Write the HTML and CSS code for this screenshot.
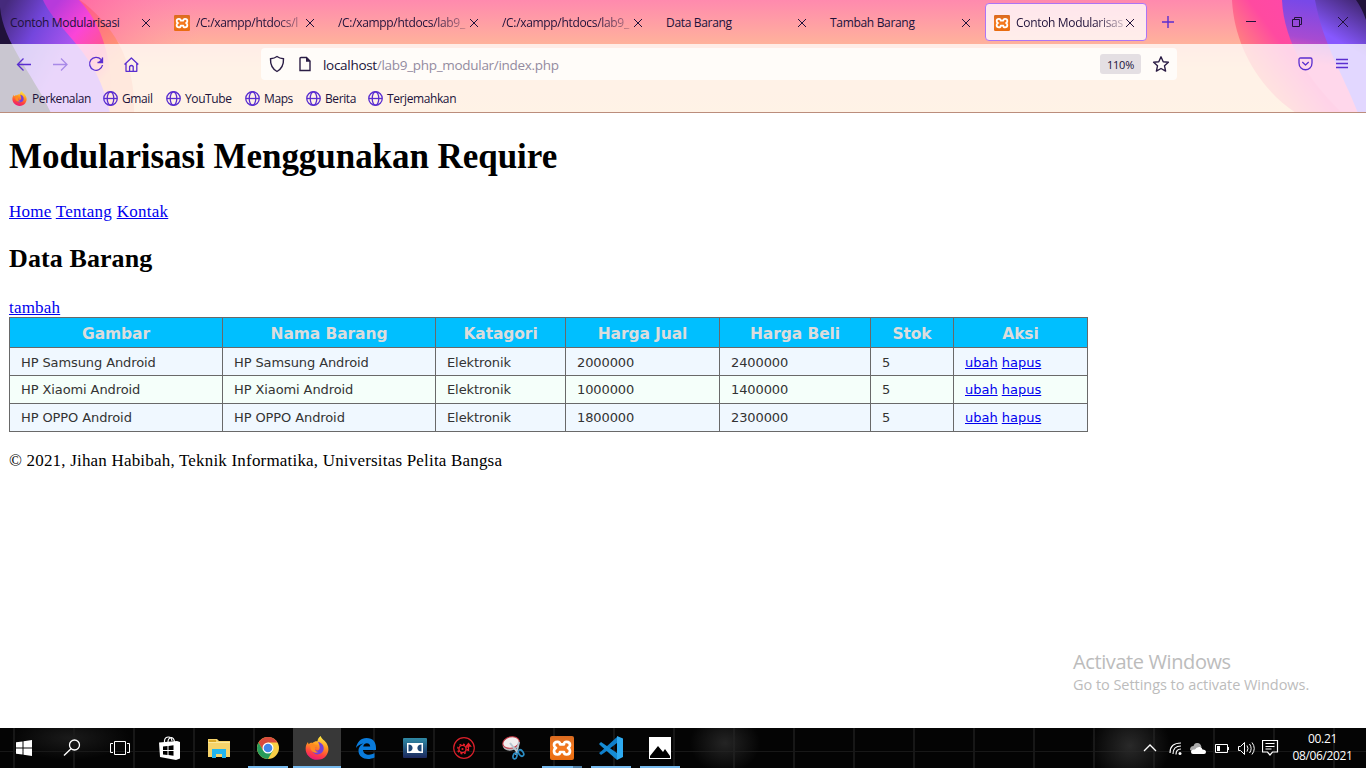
FILE: index.html
```html
<!DOCTYPE html>
<html lang="id">
<head>
<meta charset="utf-8">
<title>Contoh Modularisasi</title>
<link rel="stylesheet" href="styles.css">
</head>
<body>
<svg class="defs" width="0" height="0">
  <defs>
    <linearGradient id="ffBody" x1="0.7" y1="0" x2="0.4" y2="1"><stop offset="0" stop-color="#fff04a"/><stop offset=".4" stop-color="#ff9a1f"/><stop offset=".75" stop-color="#ff4040"/><stop offset="1" stop-color="#e8187c"/></linearGradient>
    <linearGradient id="xaBg" x1="0" y1="0" x2="0" y2="1"><stop offset="0" stop-color="#d96a20"/><stop offset=".5" stop-color="#f57a20"/><stop offset="1" stop-color="#e86c10"/></linearGradient>
    <symbol id="close" viewBox="0 0 10 10"><path d="M1 1l8 8M9 1L1 9" fill="none" stroke="currentColor" stroke-width="1"/></symbol>
    <symbol id="xampp" viewBox="0 0 24 24"><rect width="24" height="24" rx="2" fill="url(#xaBg)"/><path d="M7.5 5.8C4.600 5.800 4 7.500 4 9c0 1.700 1 2.500 2 3-1 .5-2 1.300-2 3 0 2 1.300 3.500 3.500 3.500 1.700 0 2.500-.7 2.500-2.500h4c0 1.800.8 2.500 2.500 2.500 2.200 0 3.500-1.500 3.500-3.500 0-1.700-1-2.500-2-3 1-.5 2-1.300 2-3 0-1.500-.6-3.200-3.500-3.200-1.700 0-2.500.8-2.500 2.500h-4c0-1.700-.8-2.500-2.500-2.500z" fill="none" stroke="#fff" stroke-width="2.700" stroke-linejoin="round"/></symbol>
    <symbol id="globe" viewBox="0 0 16 16"><g fill="none" stroke="#5a2ed0" stroke-width="1.4"><circle cx="8" cy="8" r="7.2"/><ellipse cx="8" cy="8" rx="3.5" ry="7.2"/><path d="M1 8h14"/></g></symbol>
    <symbol id="firefox" viewBox="0 0 24 24"><path d="M3 6c0 1 .3 1.600.8 2.300C5 7 6.500 6.600 7.500 7 9 5.500 11 5 12.500 5.300 12.500 3.200 14 1 15.800 0c.2 3 5 4.500 6.400 8.500C24 12 24 16 21 20c-4 5-13 5.300-17.500 0C-.5 15.500 0 9.500 3 6z" fill="url(#ffBody)"/><path d="M13 6c4 .5 6.500 4 5.500 8-1 4-6 5.500-9 3.500-3-1.600-4-5-2.500-8 1.500.4 3 .5 5 .8-.4 1-1.500 1.500-2.600 1.800 0 3 4.600 3.500 5.200.4.400-2.500-.6-4.500-1.600-6.500z" fill="#7540d8"/><path d="M5 8c2-1 4-.4 5 1 1 .3 2 .5 3 .5-.6 1.500-2 1.500-3 2.500-.5 2 1 4 3.500 4-3 2-7 0-8-3z" fill="#ff8a20"/></symbol>
  </defs>
</svg>
<div class="screen">
  <header class="browser">
    <svg class="art" viewBox="0 0 1366 113" width="1366" height="113">
      <defs>
        <linearGradient id="base" x1="0" y1="0" x2="0" y2="113" gradientUnits="userSpaceOnUse"><stop offset="0" stop-color="#ff8aae"/><stop offset=".4" stop-color="#ffb39b"/><stop offset=".6" stop-color="#ffc89a"/><stop offset="1" stop-color="#ffcb98"/></linearGradient>
        <linearGradient id="glowL" x1="80" y1="0" x2="200" y2="0" gradientUnits="userSpaceOnUse"><stop offset="0" stop-color="#ff5a9c" stop-opacity=".6"/><stop offset="1" stop-color="#ff8aae" stop-opacity="0"/></linearGradient>
        <linearGradient id="orL" x1="90" y1="0" x2="130" y2="50" gradientUnits="userSpaceOnUse"><stop offset="0" stop-color="#ff5a8c"/><stop offset="1" stop-color="#ff9d70"/></linearGradient>
        <linearGradient id="mgL" x1="55" y1="5" x2="120" y2="60" gradientUnits="userSpaceOnUse"><stop offset="0" stop-color="#b73adb"/><stop offset=".4" stop-color="#fb45d8"/><stop offset=".75" stop-color="#ff548f"/><stop offset="1" stop-color="#ff9a70"/></linearGradient>
        <linearGradient id="puL" x1="8" y1="0" x2="75" y2="35" gradientUnits="userSpaceOnUse"><stop offset="0" stop-color="#452a7c"/><stop offset=".5" stop-color="#7446dd"/><stop offset="1" stop-color="#a855ee"/></linearGradient>
        <linearGradient id="orR" x1="1232" y1="44" x2="1290" y2="0" gradientUnits="userSpaceOnUse"><stop offset="0" stop-color="#ff8a79"/><stop offset=".55" stop-color="#ff4aa0"/><stop offset="1" stop-color="#ff48a8"/></linearGradient>
        <linearGradient id="puR" x1="1300" y1="0" x2="1290" y2="60" gradientUnits="userSpaceOnUse"><stop offset="0" stop-color="#7848e8"/><stop offset=".6" stop-color="#a74bd1"/><stop offset="1" stop-color="#ff58aa"/></linearGradient>
        <linearGradient id="viR" x1="1330" y1="36" x2="1352" y2="0" gradientUnits="userSpaceOnUse"><stop offset="0" stop-color="#8758ff"/><stop offset="1" stop-color="#462a7c"/></linearGradient>
      </defs>
      <rect width="1366" height="113" fill="url(#base)"/>
      <path d="M80 0h120v44H120z" fill="url(#glowL)"/>
      <path d="M0 0h80c30 22 56 58 54 113H0z" fill="url(#orL)"/>
      <path d="M0 0h79c23 24 36 62 31 113H0z" fill="url(#mgL)"/>
      <path d="M0 0h43c16 34 54 50 67 113H0z" fill="url(#puL)"/>
      <path d="M0 7c3 35 31 64 51 106H0z" fill="#20123a"/>
      <path d="M1232 0c2 44 26 88 64 113h70V0z" fill="url(#orR)"/>
      <path d="M1282 0c2 44 28 82 60 113h24V0z" fill="url(#puR)"/>
      <path d="M1315 0c8 44 26 70 43 113h8V0z" fill="url(#viR)"/>
      <path d="M1356 0q6 8 10 20V0z" fill="#20123a"/>
    </svg>
    <div class="tabs">
      <div class="tab"><span class="label">Contoh Modularisasi</span><svg class="x"><use href="#close"/></svg></div>
      <div class="tab"><svg class="fav"><use href="#xampp"/></svg><span class="label fade">/C:/xampp/htdocs/l</span><svg class="x"><use href="#close"/></svg></div>
      <div class="tab"><span class="label fade">/C:/xampp/htdocs/lab9_</span><svg class="x"><use href="#close"/></svg></div>
      <div class="tab"><span class="label fade">/C:/xampp/htdocs/lab9_</span><svg class="x"><use href="#close"/></svg></div>
      <div class="tab"><span class="label">Data Barang</span><svg class="x"><use href="#close"/></svg></div>
      <div class="tab"><span class="label">Tambah Barang</span><svg class="x"><use href="#close"/></svg></div>
      <div class="tab active"><svg class="fav"><use href="#xampp"/></svg><span class="label fade">Contoh Modularisas</span><svg class="x"><use href="#close"/></svg></div>
      <svg class="plus" width="12" height="12"><path d="M6 0v12M0 6h12" stroke="#5a2ed0" stroke-width="1.4"/></svg>
      <div class="window">
        <svg width="46" height="44"><path d="M18 21.500h10" stroke="#20123a"/></svg>
        <svg width="46" height="44"><path d="M18.500 19.500h7v7h-7zM20.500 19.500v-2h7v7h-2" fill="none" stroke="#20123a"/></svg>
        <svg width="46" height="44"><path d="M18 17l10 10M28 17L18 27" stroke="#20123a"/></svg>
      </div>
    </div>
    <div class="toolbar">
      <div class="row">
        <div class="navs">
          <svg width="36" height="40"><path d="M31 20.500H17.500M23.500 14.500l-6 6 6 6" class="ink"/></svg>
          <svg width="36" height="40" class="dim"><path d="M17 20.500h14M25 14.500l6 6-6 6" class="ink"/></svg>
          <svg width="36" height="40"><path d="M29 15.500a6.500 6.500 0 1 0 1.500 5.500M30.500 13.500v5h-5" class="ink"/><path d="M31 13.500v5.500h-5.500z" fill="#5a2ed0"/></svg>
          <svg width="36" height="40"><path d="M16.500 20.500l6.900-6.500 6.900 6.500M18 19.500v7.800h10.800v-7.800M21.600 27v-4.500q1.800-2 3.600 0V27" class="ink" stroke-linejoin="round"/></svg>
        </div>
        <div class="urlbar">
          <svg width="16" height="18"><path d="M8 1.500C6 3 4 3.500 1.500 3.800 1.300 9 2.500 13.500 8 16.500c5.500-3 6.700-7.500 6.500-12.700C12 3.500 10 3 8 1.500z" class="dark"/></svg>
          <svg class="doc" width="12" height="16"><path d="M2 1.500h5.500l3.500 3.500v9.500H1V2.500q0-1 1-1z" class="dark"/><path d="M7 1v4.700h4.500z" fill="#2b1d45"/></svg>
          <span class="url">localhost<i>/lab9_php_modular/index.php</i></span>
          <span class="zoom">110%</span>
          <svg class="star" width="18" height="18"><path d="M9 1.800l2.200 4.900 5.200.6-3.900 3.500 1.100 5.300L9 13.500l-4.600 2.600 1.100-5.300-3.900-3.500 5.200-.6z" class="dark" stroke-linejoin="round"/></svg>
        </div>
        <svg class="pocket" width="16" height="14"><path d="M2.500 1h10q1.500 0 1.500 1.500V6c0 9-13 9-13 0V2.500Q1 1 2.500 1zM4.300 5l3.200 3 3.200-3" class="ink" stroke-linejoin="round"/></svg>
        <svg class="menu" width="12" height="12"><path d="M0 1.500h12M0 5.500h12M0 9.500h12" class="ink"/></svg>
      </div>
      <nav class="marks">
        <span class="m1"><svg><use href="#firefox"/></svg>Perkenalan</span>
        <span class="m2"><svg><use href="#globe"/></svg>Gmail</span>
        <span class="m3"><svg><use href="#globe"/></svg>YouTube</span>
        <span class="m4"><svg><use href="#globe"/></svg>Maps</span>
        <span class="m5"><svg><use href="#globe"/></svg>Berita</span>
        <span class="m6"><svg><use href="#globe"/></svg>Terjemahkan</span>
      </nav>
    </div>
  </header>

  <main class="page">
    <h1>Modularisasi Menggunakan Require</h1>
    <nav class="links"><a href="#">Home</a> <a href="#">Tentang</a> <a href="#">Kontak</a></nav>
    <h2>Data Barang</h2>
    <div class="add"><a href="#">tambah</a></div>
    <table class="goods">
      <colgroup><col class="c1"><col class="c2"><col class="c3"><col class="c4"><col class="c5"><col class="c6"><col class="c7"></colgroup>
      <tr><th>Gambar</th><th>Nama Barang</th><th>Katagori</th><th>Harga Jual</th><th>Harga Beli</th><th>Stok</th><th>Aksi</th></tr>
      <tr class="first"><td>HP Samsung Android</td><td>HP Samsung Android</td><td>Elektronik</td><td>2000000</td><td>2400000</td><td>5</td><td><a href="#">ubah</a> <a href="#">hapus</a></td></tr>
      <tr class="alt"><td>HP Xiaomi Android</td><td>HP Xiaomi Android</td><td>Elektronik</td><td>1000000</td><td>1400000</td><td>5</td><td><a href="#">ubah</a> <a href="#">hapus</a></td></tr>
      <tr><td>HP OPPO Android</td><td>HP OPPO Android</td><td>Elektronik</td><td>1800000</td><td>2300000</td><td>5</td><td><a href="#">ubah</a> <a href="#">hapus</a></td></tr>
    </table>
    <p class="copy">© 2021, Jihan Habibah, Teknik Informatika, Universitas Pelita Bangsa</p>
  </main>

  <aside class="activate"><div class="a1">Activate Windows</div><div class="a2">Go to Settings to activate Windows.</div></aside>

  <footer class="taskbar">
    <div class="apps">
      <div class="app"><svg width="16" height="16"><path d="M0 2.300l6.500-.9v6.100H0zM7.500 1.200L16 0v7.500H7.500zM0 8.500h6.500v6.100L0 13.700zM7.500 8.500H16V16l-8.500-1.200z" fill="#fff"/></svg></div>
      <div class="app"><svg width="18" height="18"><circle cx="11.500" cy="6" r="5" fill="none" stroke="#fff" stroke-width="1.300"/><path d="M8 9.700L1 16.500" stroke="#fff" stroke-width="1.400"/></svg></div>
      <div class="app"><svg width="20" height="14"><path d="M4.500.5h11v13h-11zM3 2.500H.5v9H3M17 2.500h2.500v9H17" fill="none" stroke="#fff"/></svg></div>
      <div class="app store"><svg width="22" height="24"><path d="M5.500 8V4.500Q6 1 9.500 1q3 0 3.500 4M9 6q0-4 3.500-4.500Q15 2 15.500 6" fill="none" stroke="#fff" stroke-width="1.200"/><path d="M0 6.500L18 5l3 1v16.500L17 24 1 21z" fill="#fff"/><path d="M4 10.500l4.500-.5v4H4zM9.500 9.900l5-.6V14h-5zM4 15h4.500v4L4 18.500zM9.500 15h5v4.700l-5-.6z" fill="#000"/></svg></div>
      <div class="app"><svg width="22" height="19"><path d="M0 0h9l2 2h11v16H0z" fill="#f6d36a"/><path d="M1 1h7v2H1z" fill="#dba928"/><path d="M0 3h22v1H0z" fill="#fde99c"/><path d="M4 10h14v9h-4v-4H8v4H4z" fill="#22b6ee"/></svg></div>
      <div class="app run"><svg width="22" height="22"><circle cx="11" cy="11" r="11" fill="#f9cf45"/><path d="M1.500 5.500A11 11 0 0 1 20.500 5.500H11l-4.800 8.200z" fill="#d94a3d"/><path d="M1.500 5.500A11 11 0 0 0 11 22l4.800-8.200H6.200z" fill="#279b5b"/><circle cx="11" cy="11" r="5.500" fill="#fff"/><circle cx="11" cy="11" r="4.300" fill="#4386ea"/></svg></div>
      <div class="app current"><svg width="24" height="24"><use href="#firefox"/></svg></div>
      <div class="app"><svg width="20" height="21"><path d="M0 10C1 4 5 0 10.500 0 17 0 20 4 20 10v2H7c.3 5 6.500 6 11.500 3.300v4.200C11 23 2.500 20 2.500 13c0-4 2.500-6.500 5-7.500C4.500 5.800 1.800 7.500 0 10zm7.200-1.500h7c0-4.500-6.500-4.500-7 0z" fill="#0a7bdb"/></svg></div>
      <div class="app"><svg width="24" height="20"><defs><linearGradient id="db" x1="0" y1="0" x2="0" y2="1"><stop offset="0" stop-color="#2f8aa5"/><stop offset="1" stop-color="#1c285d"/></linearGradient></defs><rect width="24" height="20" rx="1" fill="url(#db)"/><path d="M4 5h16v10H4z" fill="#fff"/><path d="M5.500 6.500C11 6.500 11 13.500 5.500 13.500zM18.500 6.500C13 6.500 13 13.500 18.500 13.500z" fill="#1f4876"/></svg></div>
      <div class="app"><svg width="22" height="22"><circle cx="11" cy="11" r="10.300" fill="none" stroke="#d8202a" stroke-width="1.200"/><circle cx="9.500" cy="12" r="3.600" fill="none" stroke="#e8202a" stroke-width="1.400"/><circle cx="9.500" cy="12" r="4.800" fill="none" stroke="#e8202a" stroke-width="1.400" stroke-dasharray="1.900 1.870"/><circle cx="9.500" cy="12" r="1.100" fill="#e8202a"/><path d="M15.500 14V8M13.500 9l2-2.500 2 2.500z" stroke="#e8202a" fill="#e8202a" stroke-width="1.300"/></svg></div>
      <div class="app"><svg width="23" height="24"><ellipse cx="9" cy="8" rx="8.500" ry="6.500" transform="rotate(-20 9 8)" fill="#b9b9bd"/><ellipse cx="9" cy="6.500" rx="8.300" ry="5.600" transform="rotate(-15 9 6.500)" fill="#f1eeee" stroke="#c73845"/><path d="M8 7l8 10M17 6l-3 13" stroke="#b8c5cf" stroke-width="2"/><ellipse cx="19" cy="17" rx="2.200" ry="3.500" transform="rotate(-35 19 17)" fill="none" stroke="#2b8dc4" stroke-width="1.700"/><ellipse cx="13" cy="20" rx="1.900" ry="3" transform="rotate(15 13 20)" fill="none" stroke="#2b8dc4" stroke-width="1.700"/></svg></div>
      <div class="app run multi"><svg width="24" height="24"><use href="#xampp"/></svg></div>
      <div class="app run"><svg width="24" height="24"><path d="M18 1L2 15.500 0 17l2 2 3-2L18 7z" fill="#0f7fca"/><path d="M2 6L0 8l2 2 16 14V17z" fill="#168cd4"/><path d="M18 0l6 2.500v18.500L18 24z" fill="#2eaaf0"/></svg></div>
      <div class="app run"><svg width="22" height="22"><path d="M0 0h22v22H0z" fill="#fff"/><path d="M1 19l8-10 5 6 2-3 5 7v2H1z" fill="#000"/></svg></div>
    </div>
    <div class="tray">
      <svg width="120" height="40" class="status"><path d="M4 23l6-6 6 6" fill="none" stroke="#fff" stroke-width="1.300"/><g fill="none" stroke="#fff" stroke-width="1.200"><path d="M30 25Q30 15 41 15"/><path d="M33 26q0-8 8-8"/><path d="M36 26.500q0-5.500 5-5.500"/></g><circle cx="40" cy="25.500" r="1.500" fill="#fff"/><path d="M50 22q0-4 3.500-4 1-3.500 4-3 3 0 4 4l-7 5z" fill="#aaa"/><path d="M51 24q0-3 4-2.500 1.500-3 5-2.500 2 0 2.500 2.500 3.500 0 3.500 2.500 0 2-2 2H53q-2 0-2-2z" fill="#fff"/><path d="M75.500 16.500h12v8h-12zM88.500 19v3" fill="none" stroke="#fff"/><path d="M77 18h3v5h-3z" fill="#fff"/><path d="M98.500 18.500h2l4-4v12l-4-4h-2zM107 17.500q2 3 0 6M109.500 16q3.300 4.500 0 9M112 14.500q4.500 6 0 12" fill="none" stroke="#fff"/></svg>
      <svg width="17" height="17" class="note"><path d="M.5.5h15v11.500h-5l-2.500 3-2.500-3h-5zM3.500 3.500h9M3.500 6.500h9M3.500 9h6" fill="none" stroke="#fff" stroke-width="1.200"/></svg>
      <div class="clock"><div class="time">00.21</div><div class="date">08/06/2021</div></div>
    </div>
  </footer>
</div>
</body>
</html>
```
FILE: styles.css
```css
* { box-sizing: border-box; }
body { margin: 0; background: #fff; overflow: hidden; }
svg { display: block; flex: none; }
.defs { position: absolute; }
.screen { width: 1366px; height: 768px; display: flex; flex-direction: column; position: relative; }
.browser { height: 113px; position: relative; font: 12px "Open Sans", sans-serif; color: #20123a; }
.art { position: absolute; left: 0; top: 0; }
.tabs { position: relative; height: 44px; display: flex; align-items: center; }
.tab { width: 164px; height: 44px; padding: 1px 13px 0 10px; display: flex; align-items: center; flex: none; }
.tab .fav { width: 16px; height: 16px; margin-right: 6px; }
.label { flex: 1; min-width: 0; white-space: nowrap; letter-spacing: -.32px; }
.fade { -webkit-mask-image: linear-gradient(to right, #000 72%, rgba(0,0,0,.2) 100%); mask-image: linear-gradient(to right, #000 72%, rgba(0,0,0,.2) 100%); }
.x { width: 10px; height: 10px; }
.active { width: 162px; height: 38px; margin: 0 0 0 1px; padding: 1px 11px 0 8px; border: 1px solid #ad74f5; border-radius: 4px; background: rgba(255,255,255,.78); }
.plus { margin-left: 15px; }
.window { display: flex; margin-left: auto; }
.toolbar { position: relative; height: 69px; background: rgba(255,255,255,.76); border-bottom: 1px solid #bb8d7c; background-clip: padding-box; }
.row { height: 40px; display: flex; align-items: center; }
.navs { display: flex; width: 261px; }
.ink { fill: none; stroke: #5a2ed0; stroke-width: 1.3; }
.dark { fill: none; stroke: #2b1d45; stroke-width: 1.4; }
.dim { opacity: .45; }
.urlbar { width: 916px; height: 32px; padding: 0 7px 0 8px; border-radius: 4px; background: #fffcf9; display: flex; align-items: center; }
.doc { margin-left: 14px; }
.url { margin-left: 12px; padding-top: 1px; font-size: 13.5px; letter-spacing: -.3px; flex: 1; }
.url i { font-style: normal; color: #938ba0; }
.zoom { width: 41px; height: 20px; border-radius: 3px; background: #e4dfe3; text-align: center; font-size: 11px; line-height: 21px; letter-spacing: -.2px; }
.star { margin-left: 11px; }
.pocket { margin-left: 121px; }
.menu { margin-left: 22px; }
.marks { display: flex; padding-left: 12px; height: 28px; align-items: center; letter-spacing: -.4px; }
.marks span { display: flex; align-items: center; white-space: nowrap; }
.marks svg { width: 15px; height: 15px; margin-right: 4px; }
.m1 { width: 91px; } .m2 { width: 63px; } .m3 { width: 79px; } .m4 { width: 61px; } .m5 { width: 62px; }
.marks .m1 svg { margin-right: 5px; }
.page { height: 615px; padding-left: 9px; color: #000; font: 17px "Liberation Serif", serif; letter-spacing: .19px; }
.page a { color: #0000ee; }
h1 { margin: 0; padding-top: 24px; font-size: 35px; line-height: 40px; letter-spacing: -.05px; }
.links { margin-top: 25px; line-height: 20px; letter-spacing: .26px; }
h2 { margin: 22px 0 0; font-size: 26px; line-height: 30px; letter-spacing: .1px; }
.add { margin-top: 24px; line-height: 19px; }
.goods { width: 1079px; table-layout: fixed; border-collapse: collapse; font: 13px "DejaVu Sans", sans-serif; letter-spacing: -.1px; color: #333; }
.goods th, .goods td { border: 1px solid #696969; padding: 0 11px; height: 28px; text-align: left; white-space: nowrap; }
.goods th { height: 30px; padding: 2px 0 0; background: #00bfff; color: #dcdcdc; font-size: 15.5px; text-align: center; letter-spacing: -.1px; }
.goods tr { background: #f0f8ff; }
.goods .first td { padding-top: 2px; }
.goods .alt { background: #f5fffa; }
.goods a { letter-spacing: 0; }
.c1, .c2 { width: 213px; } .c3 { width: 130px; } .c4 { width: 154px; } .c5 { width: 151px; } .c6 { width: 83px; } .c7 { width: 134px; }
.copy { margin: 19px 0 0; line-height: 20px; }
.activate { position: absolute; left: 1073px; top: 649px; font-family: "Open Sans", sans-serif; color: #bcbcbc; white-space: nowrap; }
.a1 { font-size: 20px; line-height: 26px; letter-spacing: -.4px; }
.a2 { font-size: 14.5px; line-height: 20px; letter-spacing: -.04px; }
.taskbar { height: 40px; display: flex; justify-content: space-between; background-color: #040404; background-image: radial-gradient(ellipse 35px 30px at 725px 15px, #242424, transparent), radial-gradient(ellipse 40px 40px at 1130px 18px, #292929, transparent), radial-gradient(ellipse 60px 22px at 70px 10px, #1a1a1a, transparent), linear-gradient(transparent 23px, #181818 23px, #181818 24px, transparent 24px), repeating-linear-gradient(to right, transparent 0, transparent 13px, #171717 13px, #171717 15px, transparent 15px, transparent 60px); }
.apps { display: flex; gap: 1px; }
.app { width: 48px; height: 40px; display: flex; align-items: center; justify-content: center; flex: none; }
.app:nth-child(2), .app:nth-child(3) { margin-left: -1px; }
.app.store { margin-left: 1px; }
.run { background: linear-gradient(#76b9ed, #76b9ed) 4px 38px / 40px 2px no-repeat; }
.multi { background-image: linear-gradient(to right, #76b9ed 78%, #507fa5 78%); }
.current { background: #383838; border-bottom: 2px solid #76b9ed; padding-top: 2px; }
.tray { display: flex; color: #fff; font: 12px "Open Sans", sans-serif; }
.status { margin-right: 2px; }
.note { margin: 12px 0 0; }
.clock { width: 87px; text-align: center; padding: 2px 0 0 0; line-height: 17px; letter-spacing: -.35px; }
```
